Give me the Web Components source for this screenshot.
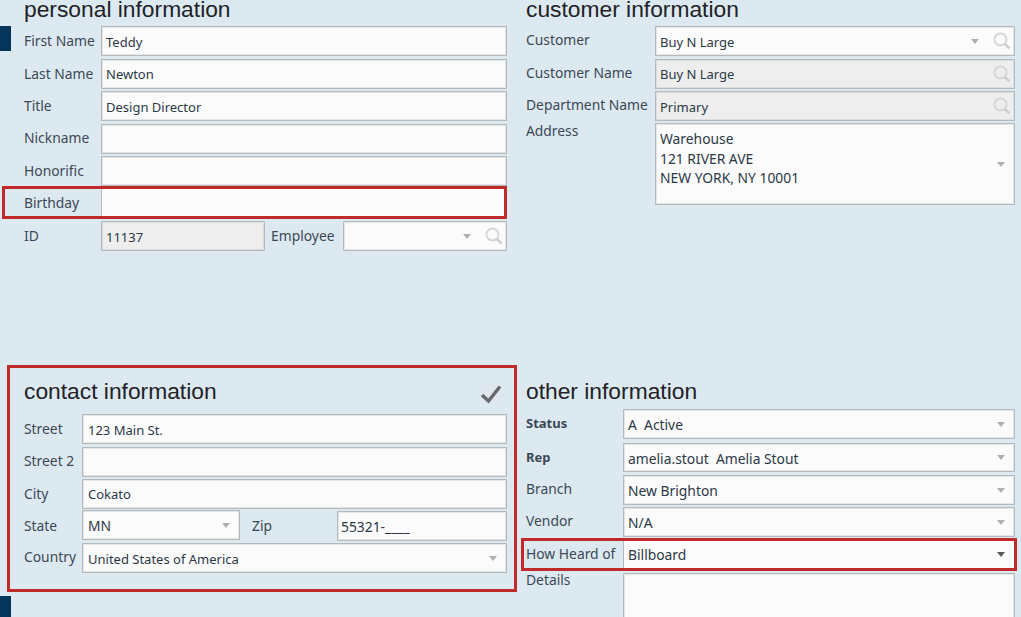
<!DOCTYPE html>
<html>
<head>
<meta charset="utf-8">
<style>
    html, body { margin: 0; height: 617px; overflow: hidden; background: #dce9f1; }
    body { font-family: "Noto Sans", "Open Sans", sans-serif; font-size: 13px; }
    customer-page { color: #2b3846; }
</style>
</head>
<body>
<customer-page>
    <info-section slot="personal" heading="personal information" style="--label-w: 77px;--label-lh: 29px">
        <form-row label="First Name"><text-field>Teddy</text-field></form-row>
        <form-row label="Last Name"><text-field>Newton</text-field></form-row>
        <form-row label="Title"><text-field>Design Director</text-field></form-row>
        <form-row label="Nickname" style="--label-lh:28px"><text-field></text-field></form-row>
        <form-row label="Honorific"><text-field></text-field></form-row>
        <form-row label="Birthday" marked style="margin:-2.5px 0 -0.5px -22px;--mark-pad:19px;--mark-lh:28px"><text-field bare></text-field></form-row>
        <form-row label="ID">
            <text-field locked style="flex:0 0 164px">11137</text-field>
            <span class="inline-label" style="margin-left:6px;width:72px">Employee</span>
            <text-field arrow search></text-field>
        </form-row>
    </info-section>

    <info-section slot="customer" heading="customer information" style="--label-w: 129px">
        <form-row label="Customer"><text-field arrow search>Buy N Large</text-field></form-row>
        <form-row label="Customer Name"><text-field locked search>Buy N Large</text-field></form-row>
        <form-row label="Department Name"><text-field locked search>Primary</text-field></form-row>
        <form-row label="Address" top style="height:82px;margin-top:-0.5px"><text-field arrow multiline style="--value-size:13.85px">Warehouse
121 RIVER AVE
NEW YORK, NY 10001</text-field></form-row>
    </info-section>

    <info-section slot="contact" heading="contact information" boxed style="--label-w: 58px;--label-lh: 30px;--field-pad: 5px">
        <svg slot="action" width="22" height="20" viewBox="0 0 22 20"><rect width="22" height="20" fill="#dfe6ed"/><path d="M2 11 8.5 17 20 2.5" fill="none" stroke="#66696d" stroke-width="3.4"/></svg>
        <form-row label="Street"><text-field>123 Main St.</text-field></form-row>
        <form-row label="Street 2" style="--label-lh:28px"><text-field></text-field></form-row>
        <form-row label="City"><text-field>Cokato</text-field></form-row>
        <form-row label="State">
            <text-field arrow style="flex:0 0 158px;margin-top:-1px;--value-size:13.85px">MN</text-field>
            <span class="inline-label" style="margin-left:12px;width:85px">Zip</span>
            <text-field style="--field-pad:3px;--value-size:13.85px">55321-____</text-field>
        </form-row>
        <form-row label="Country" style="--label-lh:28px"><text-field arrow>United States of America</text-field></form-row>
    </info-section>

    <info-section slot="other" heading="other information" style="--label-w: 97px;--row-gap:0px;--value-size:13.85px;--value-top:0px">
        <form-row label="Status" bold><text-field arrow>A&nbsp; Active</text-field></form-row>
        <form-row label="Rep" bold style="margin-top:4px;height:29px;--value-top:1px"><text-field arrow>amelia.stout&nbsp; Amelia Stout</text-field></form-row>
        <form-row label="Branch" style="margin-top:3px"><text-field arrow>New Brighton</text-field></form-row>
        <form-row label="Vendor" style="margin-top:2px"><text-field arrow>N/A</text-field></form-row>
        <form-row label="How Heard of" marked style="margin:1px -2px 0 -5px;--mark-pad:2px"><text-field bare arrow dark>Billboard</text-field></form-row>
        <form-row label="Details" top style="height:70px;margin-top:2px;--top-lh:14px"><text-field></text-field></form-row>
    </info-section>
</customer-page>

<script>
    class CustomerPage extends HTMLElement {
        constructor() {
            super();
            const shadow = this.attachShadow({ mode: 'open' });
            shadow.innerHTML = `
                <style>
                    :host {
                        display: grid;
                        grid-template-columns: 517px 504px;
                        grid-template-rows: 365px 252px;
                        height: 617px;
                        position: relative;
                        overflow: hidden;
                    }
                    .cell { padding: 0 10px 0 24px; }
                    .cell.right { padding: 0 6px 0 9px; }
                    .cell.boxed { padding: 0 0 0 7px; }
                    .tab { position: absolute; left: 0; width: 11px; background: #03365a; }
                </style>
                <div class="cell"><slot name="personal"></slot></div>
                <div class="cell right"><slot name="customer"></slot></div>
                <div class="cell boxed"><slot name="contact"></slot></div>
                <div class="cell right"><slot name="other"></slot></div>
                <div class="tab" style="top:26px;height:25px"></div>
                <div class="tab" style="top:596px;height:21px"></div>
            `;
        }
    }

    class InfoSection extends HTMLElement {
        constructor() {
            super();
            const shadow = this.attachShadow({ mode: 'open' });
            shadow.innerHTML = `
                <style>
                    :host { display: block; }
                    .head {
                        display: flex;
                        justify-content: space-between;
                        align-items: flex-start;
                        height: 26px;
                        margin: -4px 0 4px;
                    }
                    h2 {
                        margin: 0;
                        font: 400 22.8px/26px "Liberation Sans", Arial, sans-serif;
                        color: #1f2226;
                        white-space: nowrap;
                    }
                    .rows { display: flex; flex-direction: column; gap: var(--row-gap, 2.5px); }
                    :host([boxed]) {
                        height: 227px;
                        box-sizing: border-box;
                        border: 3px solid #c02a2a;
                        padding: 10px 7px 0 14px;
                    }
                    :host([boxed]) .head { margin: 0 0 10.25px; }
                    :host([boxed]) .rows { gap: 2.25px; }
                    ::slotted(svg) { margin: 6px 5px 0 0; }
                    :host([heading^="other"]) .head { margin: 13px 0 5px; }
                </style>
                <div class="head"><h2></h2><slot name="action"></slot></div>
                <div class="rows"><slot></slot></div>
            `;
            shadow.querySelector('h2').textContent = this.getAttribute('heading');
        }
    }

    class FormRow extends HTMLElement {
        constructor() {
            super();
            const shadow = this.attachShadow({ mode: 'open' });
            shadow.innerHTML = `
                <style>
                    :host { display: flex; height: 30px; box-sizing: border-box; }
                    label {
                        flex: 0 0 var(--label-w);
                        font-size: 13.85px;
                        line-height: var(--label-lh, 28px);
                        white-space: nowrap;
                        color: #3c4856;
                    }
                    .fields { flex: 1; display: flex; min-width: 0; }
                    :host([bold]) label { font-weight: 700; font-size: 13px; }
                    :host([top]) label { line-height: var(--top-lh, 16px); }
                    :host([marked]) {
                        height: 33px;
                        border: 3px solid #c02a2a;
                        padding-left: var(--mark-pad);
                    }
                    :host([marked]) label { line-height: var(--mark-lh, 26px); }
                    ::slotted(.inline-label) {
                        font-size: 13.85px;
                        line-height: var(--label-lh, 28px);
                        white-space: nowrap;
                        color: #3c4856;
                        flex: none;
                    }
                </style>
                <label></label>
                <div class="fields"><slot></slot></div>
            `;
            shadow.querySelector('label').textContent = this.getAttribute('label');
        }
    }

    class TextField extends HTMLElement {
        constructor() {
            super();
            const shadow = this.attachShadow({ mode: 'open' });
            const arrow = this.hasAttribute('arrow') ? '<span class="arrow"></span>' : '';
            const search = this.hasAttribute('search')
                ? `<svg class="search" width="18" height="18" viewBox="0 0 18 18">
                       <circle cx="7.5" cy="7.5" r="6" fill="none" stroke="#d3d5d6" stroke-width="1.8"/>
                       <path d="M11.8 11.8 16.5 16.5" stroke="#cbcdce" stroke-width="2.6"/>
                   </svg>`
                : '';
            shadow.innerHTML = `
                <style>
                    :host {
                        display: flex;
                        flex: 1;
                        min-width: 0;
                        align-items: center;
                        box-sizing: border-box;
                        height: 100%;
                        border: 1px solid #b6babc;
                        outline: 1px solid rgba(182,186,188,.35);
                        outline-offset: -2px;
                        background: #fbfbfb;
                        color: #2b3846;
                        padding: 0 0 0 var(--field-pad, 4px);
                    }
                    :host([locked]) { background: #eeeeee; }
                    :host([bare]) { border-width: 0 0 0 1px; outline: 0; }
                    .value {
                        flex: 1;
                        min-width: 0;
                        white-space: nowrap;
                        font-size: var(--value-size, 13px);
                        padding-top: var(--value-top, 1px);
                    }
                    :host([multiline]) .value {
                        white-space: pre;
                        line-height: 19.5px;
                        align-self: flex-start;
                        padding-top: 5px;
                    }
                    .arrow {
                        flex: none;
                        width: 0;
                        height: 0;
                        margin-right: 9px;
                        border-left: 4.5px solid transparent;
                        border-right: 4.5px solid transparent;
                        border-top: 5px solid #adb0b2;
                    }
                    :host([dark]) .arrow { border-top-color: #55585b; }
                    .search { flex: none; margin: 0 3px 0 5px; }
                </style>
                <span class="value"><slot></slot></span>${arrow}${search}
            `;
        }
    }

    customElements.define('customer-page', CustomerPage);
    customElements.define('info-section', InfoSection);
    customElements.define('form-row', FormRow);
    customElements.define('text-field', TextField);
</script>
</body>
</html>
